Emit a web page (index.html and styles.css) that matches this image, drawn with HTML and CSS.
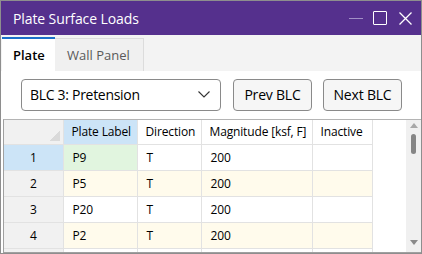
FILE: index.html
```html
<!DOCTYPE html>
<html lang="en">
<head>
    <meta charset="UTF-8">
    <title>Plate Surface Loads</title>
    <link rel="stylesheet" href="styles.css">
</head>
<body>
    <div class="window">
        <header class="titlebar">
            <h1>Plate Surface Loads</h1>
            <div class="controls">
                <span class="min"></span>
                <span class="max"></span>
                <svg class="close" width="13" height="13" viewBox="0 0 13 13">
                    <path d="M0.5 0.5 L12.5 12.5 M12.5 0.5 L0.5 12.5" stroke="#fff" stroke-width="1.3"/>
                </svg>
            </div>
        </header>
        <nav class="tabs">
            <div class="tab active">Plate</div>
            <div class="tab">Wall Panel</div>
        </nav>
        <main>
            <div class="toolbar">
                <div class="select">
                    <span>BLC 3: Pretension</span>
                    <svg width="12" height="7" viewBox="0 0 12 7">
                        <path d="M0.5 0.5 L6 6 L11.5 0.5" fill="none" stroke="#333" stroke-width="1.1"/>
                    </svg>
                </div>
                <button class="btn prev">Prev BLC</button>
                <button class="btn">Next BLC</button>
            </div>
            <div class="grid">
                <div class="grid-body">
                    <table>
                        <thead>
                            <tr>
                                <th class="corner"></th>
                                <th class="sel">Plate Label</th>
                                <th>Direction</th>
                                <th>Magnitude [ksf, F]</th>
                                <th>Inactive</th>
                            </tr>
                        </thead>
                        <tbody>
                            <tr>
                                <td class="num sel">1</td>
                                <td class="cur">P9</td>
                                <td>T</td>
                                <td>200</td>
                                <td></td>
                            </tr>
                            <tr class="alt">
                                <td class="num">2</td>
                                <td>P5</td>
                                <td>T</td>
                                <td>200</td>
                                <td></td>
                            </tr>
                            <tr>
                                <td class="num">3</td>
                                <td>P20</td>
                                <td>T</td>
                                <td>200</td>
                                <td></td>
                            </tr>
                            <tr class="alt">
                                <td class="num">4</td>
                                <td>P2</td>
                                <td>T</td>
                                <td>200</td>
                                <td></td>
                            </tr>
                            <tr>
                                <td class="num"></td>
                                <td></td>
                                <td></td>
                                <td></td>
                                <td></td>
                            </tr>
                        </tbody>
                    </table>
                </div>
                <div class="scrollbar">
                    <span class="arrow up"></span>
                    <span class="thumb"></span>
                    <span class="arrow down"></span>
                </div>
            </div>
        </main>
    </div>
</body>
</html>
```

FILE: styles.css
```css
* {
    margin: 0;
    padding: 0;
    box-sizing: border-box;
}

body {
    font-family: 'Segoe UI', 'Open Sans', sans-serif;
    background-color: #fff;
    color: #000;
}

.window {
    width: 422px;
    height: 254px;
    border: 1px solid #8e8e8e;
    display: flex;
    flex-direction: column;
    overflow: hidden;
    background-color: #fff;
}

.titlebar {
    height: 34px;
    background-color: #55308d;
    color: #fff;
    display: flex;
    align-items: center;
    justify-content: space-between;
    padding: 0 9px 0 12px;
    flex-shrink: 0;
}

.titlebar h1 {
    font-size: 14px;
    font-weight: 400;
    margin-top: 1px;
    letter-spacing: -0.1px;
}

.controls {
    display: flex;
    align-items: center;
    gap: 12px;
}

.min {
    width: 14px;
    height: 1px;
    background-color: #a28fc6;
    margin-right: -2px;
}

.max {
    width: 14px;
    height: 14px;
    border: 1.4px solid #fff;
    border-radius: 1px;
}

.tabs {
    height: 36px;
    background-color: #f3f3f3;
    display: flex;
    align-items: flex-end;
    padding-left: 1px;
    flex-shrink: 0;
}

.tab {
    height: 33px;
    padding: 0 13px 0 12px;
    display: flex;
    align-items: center;
    font-size: 13px;
    color: #5a5a5a;
    background-color: #f0f0f0;
    border-top: 1px solid #dcdcdc;
    border-right: 1px solid #dcdcdc;
}

.tab.active {
    height: 34px;
    padding: 0 11px;
    color: #000;
    font-weight: 600;
    background-color: #fff;
    border-top: 2px solid #1a6fc9;
    border-right: none;
    width: 53px;
}

main {
    flex: 1;
    display: flex;
    flex-direction: column;
    padding: 7px 0 0 2px;
    min-height: 0;
}

.toolbar {
    display: flex;
    align-items: center;
    gap: 11px;
    padding-left: 18px;
    height: 33px;
    flex-shrink: 0;
}

.select {
    width: 200px;
    height: 32px;
    border: 1px solid #8a8a8a;
    border-radius: 4px;
    display: flex;
    align-items: center;
    justify-content: space-between;
    padding: 0 10px 0 8px;
    font-size: 14px;
    letter-spacing: -0.3px;
}

.btn {
    font-family: inherit;
    font-size: 14px;
    height: 32px;
    width: 79px;
    border: 1px solid #8a8a8a;
    border-radius: 4px;
    background-color: #f6f6f6;
    color: #000;
    letter-spacing: -0.2px;
}

.prev {
    margin-left: 1px;
}

.grid {
    margin-top: 8px;
    flex: 1;
    min-height: 0;
    display: flex;
    border-top: 1px solid #b4b4b4;
    border-left: 1px solid #a0a0a0;
    border-bottom: 1px solid #a0a0a0;
}

.grid-body {
    flex: 1;
    overflow: hidden;
}

table {
    border-collapse: collapse;
    table-layout: fixed;
    width: 368px;
    font-size: 12px;
    letter-spacing: -0.15px;
}

th, td {
    height: 26px;
    border-right: 1px solid #e2e2e2;
    border-bottom: 1px solid #e2e2e2;
    text-align: left;
    font-weight: 400;
    padding: 0 7px 0 9px;
    white-space: nowrap;
}

th {
    height: 24px;
    padding-left: 8px;
    background-color: #fff;
}

th:nth-child(1) { width: 59px; }
th:nth-child(2) { width: 74px; }
th:nth-child(3) { width: 64px; }
th:nth-child(4) { width: 111px; }
th:nth-child(5) { width: 60px; }

.corner {
    background-color: #f1f1f1;
    background-image: linear-gradient(135deg, transparent 50%, #dadada 50%);
    background-size: 11px 11px;
    background-position: right 3px bottom 3px;
    background-repeat: no-repeat;
}

td.num {
    background-color: #f1f1f1;
    text-align: center;
    padding: 0;
}

.sel, td.num.sel {
    background-color: #cce4f7;
}

td.cur {
    background-color: #e1f5df;
}

tr.alt td {
    background-color: #fffbec;
}

tr.alt td.num {
    background-color: #f1f1f1;
}

.scrollbar {
    width: 15px;
    background-color: #f0f0f0;
    position: relative;
    flex-shrink: 0;
}

.thumb {
    position: absolute;
    left: 5px;
    top: 14px;
    width: 5px;
    height: 20px;
    border-radius: 3px;
    background-color: #858585;
}

.arrow {
    position: absolute;
    left: 4px;
    width: 0;
    height: 0;
    border-left: 4px solid transparent;
    border-right: 4px solid transparent;
}

.arrow.up {
    top: 3px;
    border-bottom: 5px solid #a8a8a8;
}

.arrow.down {
    bottom: 7px;
    border-top: 5px solid #8a8a8a;
}
```
